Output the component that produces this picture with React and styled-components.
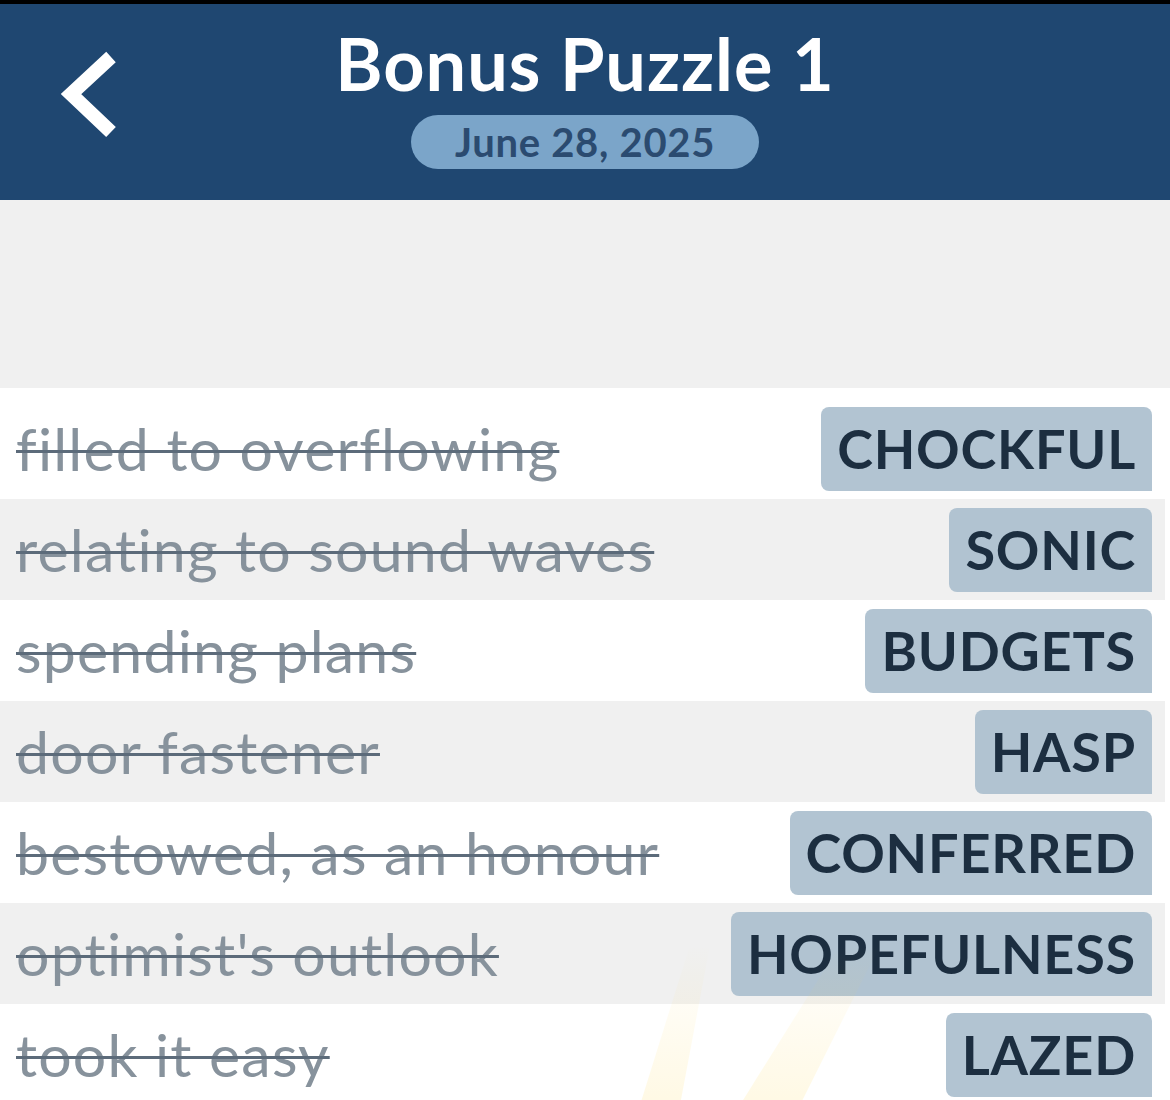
import React from "react";
import styled, { createGlobalStyle } from "styled-components";

const GlobalStyle = createGlobalStyle`
  html, body { margin: 0; padding: 0; background: #ffffff; }
  * { box-sizing: border-box; }
`;

const FONT = `Lato, "Noto Sans", "Liberation Sans", sans-serif`;

const Page = styled.div`
  position: relative;
  width: 1170px;
  height: 1100px;
  overflow: hidden;
  background: #ffffff;
  font-family: ${FONT};
`;

const Header = styled.header`
  height: 200px;
  border-top: 4px solid #000000;
  background: #1f4771;
  display: grid;
  grid-template-columns: 1fr auto 1fr;
  align-items: start;
`;

const BackButton = styled.button`
  justify-self: start;
  margin: 44px 0 0 56px;
  padding: 0;
  border: 0;
  background: transparent;
  width: 64px;
  height: 92px;
  display: flex;
`;

const TitleBlock = styled.div`
  display: flex;
  flex-direction: column;
  align-items: center;
  padding-top: 23px;
  gap: 16px;
`;

const Title = styled.h1`
  margin: 0;
  font-size: 72px;
  line-height: 72px;
  letter-spacing: 1px;
  font-weight: 700;
  color: #ffffff;
  white-space: nowrap;
`;

const DatePill = styled.div`
  height: 54px;
  padding: 0 44px;
  border-radius: 27px;
  background: #7ba5c9;
  color: #2b4b70;
  font-size: 40px;
  letter-spacing: 0.7px;
  font-weight: 700;
  display: flex;
  align-items: center;
  white-space: nowrap;
`;

const Spacer = styled.div`
  height: 188px;
  background: #f0f0f0;
`;

const List = styled.div`
  position: relative;
  padding-top: 10px;
  background: #ffffff;
`;

const Row = styled.div`
  width: 1165px;
  height: 101px;
  display: flex;
  align-items: center;
  justify-content: space-between;
  padding: 0 13px 0 16px;
  background: ${(p) => (p.$shaded ? "#f0f0f0" : "transparent")};
  position: relative;
  z-index: 1;
`;

const Clue = styled.span`
  font-size: 59px;
  letter-spacing: 1.2px;
  font-weight: 400;
  color: #87929c;
  text-decoration: line-through;
  text-decoration-color: #5c6b7a;
  text-decoration-thickness: 3px;
  white-space: nowrap;
`;

const Answer = styled.span`
  height: 84px;
  display: flex;
  align-items: center;
  padding: 0 16px;
  border-radius: 8px 8px 0 8px;
  background: rgba(170, 190, 205, 0.9);
  color: #1c2e40;
  font-size: 54px;
  letter-spacing: 0.8px;
  font-weight: 700;
  white-space: nowrap;
`;

const Watermark = styled.svg`
  position: absolute;
  left: 560px;
  bottom: 0;
  width: 400px;
  height: 200px;
  pointer-events: none;
  z-index: 2;
`;

const rows = [
  ["filled to overflowing", "CHOCKFUL"],
  ["relating to sound waves", "SONIC"],
  ["spending plans", "BUDGETS"],
  ["door fastener", "HASP"],
  ["bestowed, as an honour", "CONFERRED"],
  ["optimist's outlook", "HOPEFULNESS"],
  ["took it easy", "LAZED"],
];

export default function App() {
  return (
    <>
      <GlobalStyle />
      <Page>
        <Header>
          <BackButton aria-label="Back">
            <svg width="64" height="92" viewBox="0 0 64 92">
              <polyline
                points="55,9 15,46 55,84"
                fill="none"
                stroke="#ffffff"
                strokeWidth="14"
                strokeLinejoin="miter"
                strokeLinecap="butt"
              />
            </svg>
          </BackButton>
          <TitleBlock>
            <Title>Bonus Puzzle 1</Title>
            <DatePill>June 28, 2025</DatePill>
          </TitleBlock>
          <div />
        </Header>
        <Spacer />
        <List>
          {rows.map(([clue, answer], i) => (
            <Row key={answer} $shaded={i % 2 === 1}>
              <Clue>{clue}</Clue>
              <Answer>{answer}</Answer>
            </Row>
          ))}
          <Watermark viewBox="0 0 400 200">
            <defs>
              <linearGradient id="wm" x1="0" y1="1" x2="0" y2="0">
                <stop offset="0" stopColor="#ffd54a" stopOpacity="0.15" />
                <stop offset="1" stopColor="#ffd54a" stopOpacity="0" />
              </linearGradient>
            </defs>
            <polygon points="80,200 120,200 150,40 130,40" fill="url(#wm)" />
            <polygon points="180,200 240,200 320,40 280,40" fill="url(#wm)" />
          </Watermark>
        </List>
      </Page>
    </>
  );
}
